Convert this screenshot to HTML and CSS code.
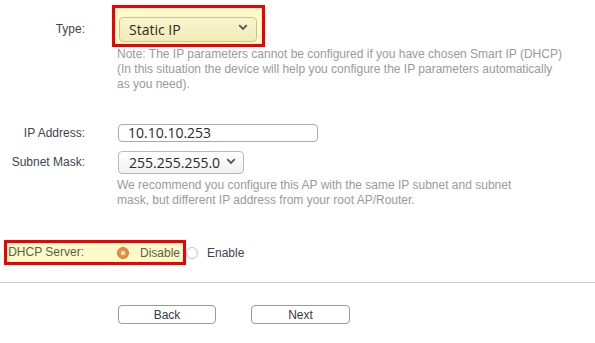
FILE: index.html
```html
<!DOCTYPE html>
<html lang="en">
<head>
    <meta charset="UTF-8">
    <title>Network Settings</title>
    <link rel="stylesheet" href="styles.css">
</head>
<body>
    <div class="form">
        <!-- Type -->
        <div class="field-row">
            <span class="lbl lbl-type">Type:</span>
            <div class="hl hl-type">
                <div class="select select-type">
                    <span>Static IP</span>
                    <svg class="chev" width="10" height="7" viewBox="0 0 10 7"><path d="M1.2 1.2 L5 5 L8.8 1.2" fill="none" stroke="#555" stroke-width="1.8"/></svg>
                </div>
            </div>
        </div>
        <p class="note note-type">Note: The IP parameters cannot be configured if you have chosen Smart IP (DHCP)<br>(In this situation the device will help you configure the IP parameters automatically<br>as you need).</p>

        <!-- IP -->
        <div class="field-row row-ip">
            <span class="lbl">IP Address:</span>
            <div class="input">10.10.10.253</div>
        </div>
        <div class="field-row row-mask">
            <span class="lbl">Subnet Mask:</span>
            <div class="select select-mask">
                <span>255.255.255.0</span>
                <svg class="chev" width="10" height="7" viewBox="0 0 10 7"><path d="M1.2 1.2 L5 5 L8.8 1.2" fill="none" stroke="#555" stroke-width="1.8"/></svg>
            </div>
        </div>
        <p class="note note-mask">We recommend you configure this AP with the same IP subnet and subnet<br>mask, but different IP address from your root AP/Router.</p>

        <!-- DHCP -->
        <div class="dhcp-row">
            <div class="hl hl-dhcp">
                <span class="lbl lbl-dhcp">DHCP Server:</span>
                <span class="radio checked"></span>
                <span class="opt">Disable</span>
            </div>
            <span class="radio"></span>
            <span class="opt opt-plain">Enable</span>
        </div>

        <div class="divider"></div>

        <div class="actions">
            <button class="btn">Back</button>
            <button class="btn">Next</button>
        </div>
    </div>
</body>
</html>
```
FILE: styles.css
```css
body {
    margin: 0;
    font-family: 'Liberation Sans', Arial, sans-serif;
    font-size: 12px;
    color: #3c4650;
    background: #ffffff;
}

.form {
    padding-top: 5px;
}

.field-row {
    display: flex;
    align-items: center;
}

.lbl {
    flex: none;
    width: 85px;
    margin-right: 33px;
    text-align: right;
    line-height: 15px;
}

.lbl-type {
    padding-top: 7px;
}

/* Highlighted (red framed) areas */
.hl {
    border: 3px solid #f00000;
    background: #fcfacb;
}

.hl-type {
    margin-left: -6px;
    padding: 9px 5px 2px 4px;
}

.select {
    display: flex;
    align-items: center;
    justify-content: space-between;
    box-sizing: border-box;
    border: 1px solid #b9b9b9;
    border-radius: 4px;
    background: linear-gradient(#ffffff, #f1f1f1);
    font-family: 'Open Sans', 'DejaVu Sans', sans-serif;
    font-size: 14px;
    color: #2a2a2a;
}

.select-type {
    width: 138px;
    height: 25px;
    padding: 0 8px 1px 9px;
    border-color: #c9c39a;
    background: linear-gradient(#f8f5cc, #f1ecb6);
}

.select-type .chev {
    margin-bottom: 3px;
}

.select-mask {
    width: 126px;
    height: 23px;
    padding: 0 7px 0 10px;
}

.select-mask .chev {
    margin-bottom: 3px;
}

.input {
    box-sizing: border-box;
    width: 200px;
    height: 18px;
    padding: 0 9px;
    border: 1px solid #aaaaaa;
    border-radius: 4px;
    font-family: 'Open Sans', 'DejaVu Sans', sans-serif;
    font-size: 14px;
    line-height: 16px;
    color: #2a2a2a;
}

.note {
    margin: 0 0 0 117px;
    line-height: 15px;
    color: #9a9a9a;
}

.row-ip {
    margin-top: 32px;
}

.row-mask {
    margin-top: 9px;
}

.note-mask {
    margin-top: 4px;
}

/* DHCP server */
.dhcp-row {
    display: flex;
    align-items: center;
    margin-top: 32px;
}

.hl-dhcp {
    display: flex;
    align-items: center;
    box-sizing: border-box;
    width: 182px;
    height: 25px;
    margin-left: 4px;
    color: #5e5f45;
}

.lbl-dhcp {
    width: 77px;
    margin-right: 33px;
}

.radio {
    flex: none;
    box-sizing: border-box;
    width: 12px;
    height: 12px;
    border: 1px solid #c4c4c4;
    border-radius: 50%;
    background: #ffffff;
}

.radio.checked {
    border-color: #d0752c;
    background: radial-gradient(circle, #fbe3c8 0 2px, #e88d40 2.6px);
}

.opt {
    margin-left: 11px;
}

.opt-plain {
    margin-left: 9px;
    color: #3c4650;
}

.divider {
    margin-top: 17px;
    border-top: 1px solid #cfcfcf;
}

.actions {
    display: flex;
    gap: 35px;
    margin: 22px 0 0 118px;
}

.btn {
    box-sizing: border-box;
    width: 98px;
    height: 19px;
    padding: 0;
    border: 1px solid #9a9a9a;
    border-radius: 4px;
    background: #ffffff;
    font-family: 'Liberation Sans', Arial, sans-serif;
    font-size: 12px;
    color: #333c44;
}

.btn + .btn {
    width: 99px;
}
```
